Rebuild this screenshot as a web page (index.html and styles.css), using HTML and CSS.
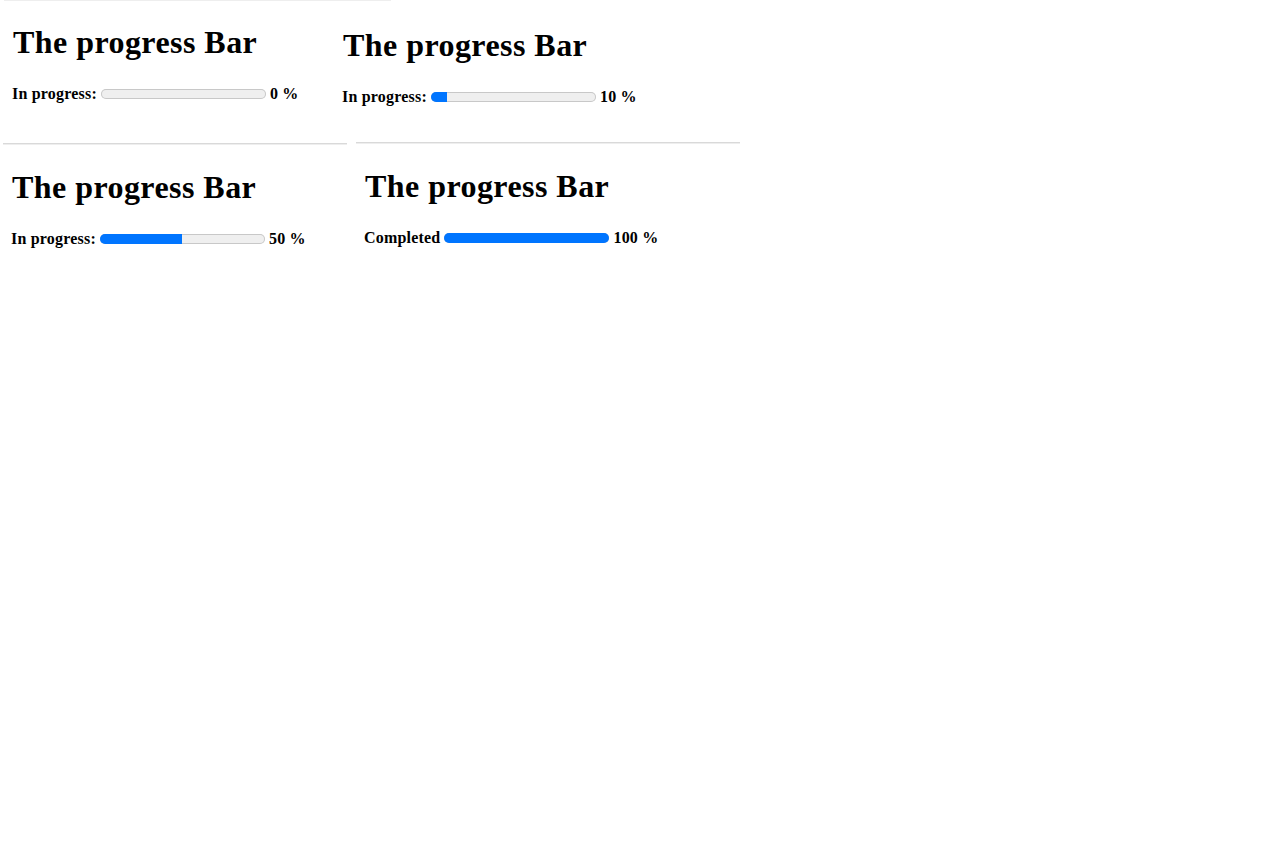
FILE: index.html
```html
<!DOCTYPE html>
<html lang="en">
<head>
<meta charset="utf-8">
<title>The progress Bar</title>
<link rel="stylesheet" href="styles.css">
</head>
<body>
  <div class="row row-top">
    <div class="rule rule-top"></div>
    <div class="cells">
      <section class="cell cell-a">
        <h1 class="title">The progress Bar</h1>
        <div class="status">
          <span class="label">In progress:</span>
          <div class="track"><div class="fill" style="width:0%"></div></div>
          <span class="value">0 %</span>
        </div>
      </section>
      <section class="cell cell-b">
        <h1 class="title">The progress Bar</h1>
        <div class="status">
          <span class="label">In progress:</span>
          <div class="track"><div class="fill" style="width:10%"></div></div>
          <span class="value">10 %</span>
        </div>
      </section>
    </div>
  </div>
  <div class="row row-bottom">
    <section class="cell cell-c">
      <div class="rule"></div>
      <div class="inner">
        <h1 class="title">The progress Bar</h1>
        <div class="status">
          <span class="label">In progress:</span>
          <div class="track"><div class="fill" style="width:50%"></div></div>
          <span class="value">50 %</span>
        </div>
      </div>
    </section>
    <section class="cell cell-d">
      <div class="rule"></div>
      <div class="inner">
        <h1 class="title">The progress Bar</h1>
        <div class="status">
          <span class="label">Completed</span>
          <div class="track"><div class="fill" style="width:100%"></div></div>
          <span class="value">100 %</span>
        </div>
      </div>
    </section>
  </div>
</body>
</html>
```

FILE: styles.css
```css
html, body {
  margin: 0;
  padding: 0;
  background: #ffffff;
}

body {
  font-family: "Liberation Serif", "Times New Roman", serif;
  color: #000000;
}

.rule {
  height: 0;
  border-top: 1px solid #d9d9d9;
  border-bottom: 1px solid #eeeeee;
}

.rule-top {
  margin-left: 4px;
  width: 387px;
  border-top: 1px solid #eeeeee;
  border-bottom: 0;
}

.cells {
  display: flex;
  align-items: flex-start;
}

.cell-a {
  width: 330px;
  padding: 23px 0 0 12px;
}

.cell-b {
  padding: 26px 0 0 0;
}

.title {
  margin: 0 0 24px 0;
  font-size: 32px;
  line-height: 37px;
  font-weight: bold;
  letter-spacing: 0.45px;
  padding-left: 1px;
}

.status {
  display: flex;
  align-items: center;
  gap: 4px;
  height: 18px;
  font-size: 16px;
  font-weight: bold;
  letter-spacing: 0.2px;
  white-space: nowrap;
}

.track {
  width: 165px;
  height: 10px;
  border-radius: 5px;
  background: #efefef;
  box-shadow: inset 0 0 0 1px #c8c8c8;
  overflow: hidden;
  display: flex;
}

.fill {
  height: 100%;
  background: #0075ff;
}

.row-bottom {
  display: flex;
  align-items: flex-start;
}

.cell-c {
  width: 344px;
  margin: 37px 0 0 3px;
}

.cell-d {
  width: 384px;
  margin: 36px 0 0 9px;
}

.inner {
  padding: 24px 0 0 8px;
}
```
